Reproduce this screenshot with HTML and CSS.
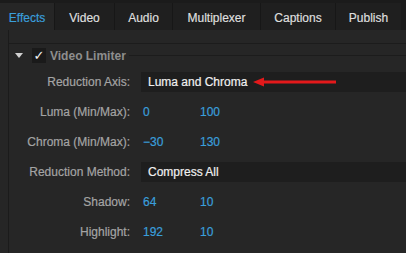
FILE: index.html
```html
<!DOCTYPE html>
<html lang="en">
<head>
  <meta charset="UTF-8" />
  <title>Export Settings - Effects</title>
  <link rel="stylesheet" href="styles.css">
</head>
<body>

  <nav class="tabs">
    <div class="tab active" style="width: 54px">Effects</div>
    <div class="tab" style="width: 60px">Video</div>
    <div class="tab" style="width: 58px">Audio</div>
    <div class="tab" style="width: 88px">Multiplexer</div>
    <div class="tab" style="width: 75px">Captions</div>
    <div class="tab" style="width: 66px">Publish</div>
  </nav>

  <div class="panel">
    <div class="spacer"></div>
    <section class="effect">
      <div class="effect-head">
        <span class="twirl"></span>
        <span class="checkbox">&#10003;</span>
        <span class="effect-title">Video Limiter</span>
      </div>

      <div class="row">
        <div class="label">Reduction Axis:</div>
        <div class="dropdown">Luma and Chroma</div>
      </div>
      <div class="row">
        <div class="label">Luma (Min/Max):</div>
        <div class="num">0</div>
        <div class="num">100</div>
      </div>
      <div class="row">
        <div class="label">Chroma (Min/Max):</div>
        <div class="num">&minus;30</div>
        <div class="num">130</div>
      </div>
      <div class="row">
        <div class="label">Reduction Method:</div>
        <div class="dropdown">Compress All</div>
      </div>
      <div class="row">
        <div class="label">Shadow:</div>
        <div class="num">64</div>
        <div class="num">10</div>
      </div>
      <div class="row">
        <div class="label">Highlight:</div>
        <div class="num">192</div>
        <div class="num">10</div>
      </div>
    </section>
  </div>

  <!-- annotation arrow pointing at the Reduction Axis dropdown -->
  <svg class="arrow" width="90" height="12" viewBox="0 0 90 12">
    <polygon points="0,6 11,1.5 11,10.5" fill="#e3191b" />
    <rect x="10" y="4.5" width="73" height="3" fill="#e3191b" />
  </svg>

</body>
</html>
```

FILE: styles.css
```css
* {
  margin: 0;
  padding: 0;
  box-sizing: border-box;
}

body {
  font-family: 'Liberation Sans', Arial, sans-serif;
  font-size: 12px;
  background: #262626;
  color: #e2e2e2;
  width: 406px;
  height: 253px;
  overflow: hidden;
  position: relative;
}

/* tab strip */
.tabs {
  display: flex;
  height: 30px;
  padding-top: 3px;
  background: #1b1b1b;
}

.tab {
  height: 27px;
  padding-top: 3px;
  display: flex;
  align-items: center;
  justify-content: center;
  background: #1f1f1f;
  border-left: 1px solid #171717;
  color: #dedede;
  -webkit-text-stroke: 0.2px currentColor; /* mac-ish weight */
}

.tab.active {
  background: #262626;
  border-left: none;
  color: #3a9edb;
}

/* effect panel */
.panel {
  margin-left: 8px;
  border-left: 1px solid #1b1b1b;
  height: 223px;
}

.spacer {
  height: 13px;
}

.effect {
  border-top: 1px solid #1c1c1c;
}

.effect-head {
  display: flex;
  align-items: center;
  height: 23px;
  padding-left: 6px;
}

.twirl {
  width: 0;
  height: 0;
  border-left: 4px solid transparent;
  border-right: 4px solid transparent;
  border-top: 5px solid #d0d0d0;
  margin-right: 9px;
}

.checkbox {
  width: 14px;
  height: 15px;
  background: #1a1a1a;
  color: #f4f4f4;
  font-family: 'DejaVu Sans', sans-serif;
  font-size: 13px;
  font-weight: bold;
  line-height: 15px;
  text-align: center;
  margin-right: 4px;
}

.effect-title {
  font-weight: bold;
  color: #8e8e8e;
}

.effect-head::after {
  content: '';
  flex: 1;
  height: 1px;
  background: #1c1c1c;
  margin-left: 3px;
  margin-top: -1px;
}

.row {
  display: flex;
  align-items: center;
  height: 30px;
  -webkit-text-stroke: 0.2px currentColor;
}

.label {
  width: 121px;
  text-align: right;
  color: #a4a4a4;
  margin-right: 11px;
}

.dropdown {
  flex: 1;
  height: 20px;
  line-height: 20px;
  padding-left: 7px;
  background: #1e1e1e;
  color: #f0f0f0;
}

.num {
  width: 57px;
  padding-left: 2px;
  color: #3a9edb;
}

/* annotation */
.arrow {
  position: absolute;
  left: 253px;
  top: 76px;
}
```
